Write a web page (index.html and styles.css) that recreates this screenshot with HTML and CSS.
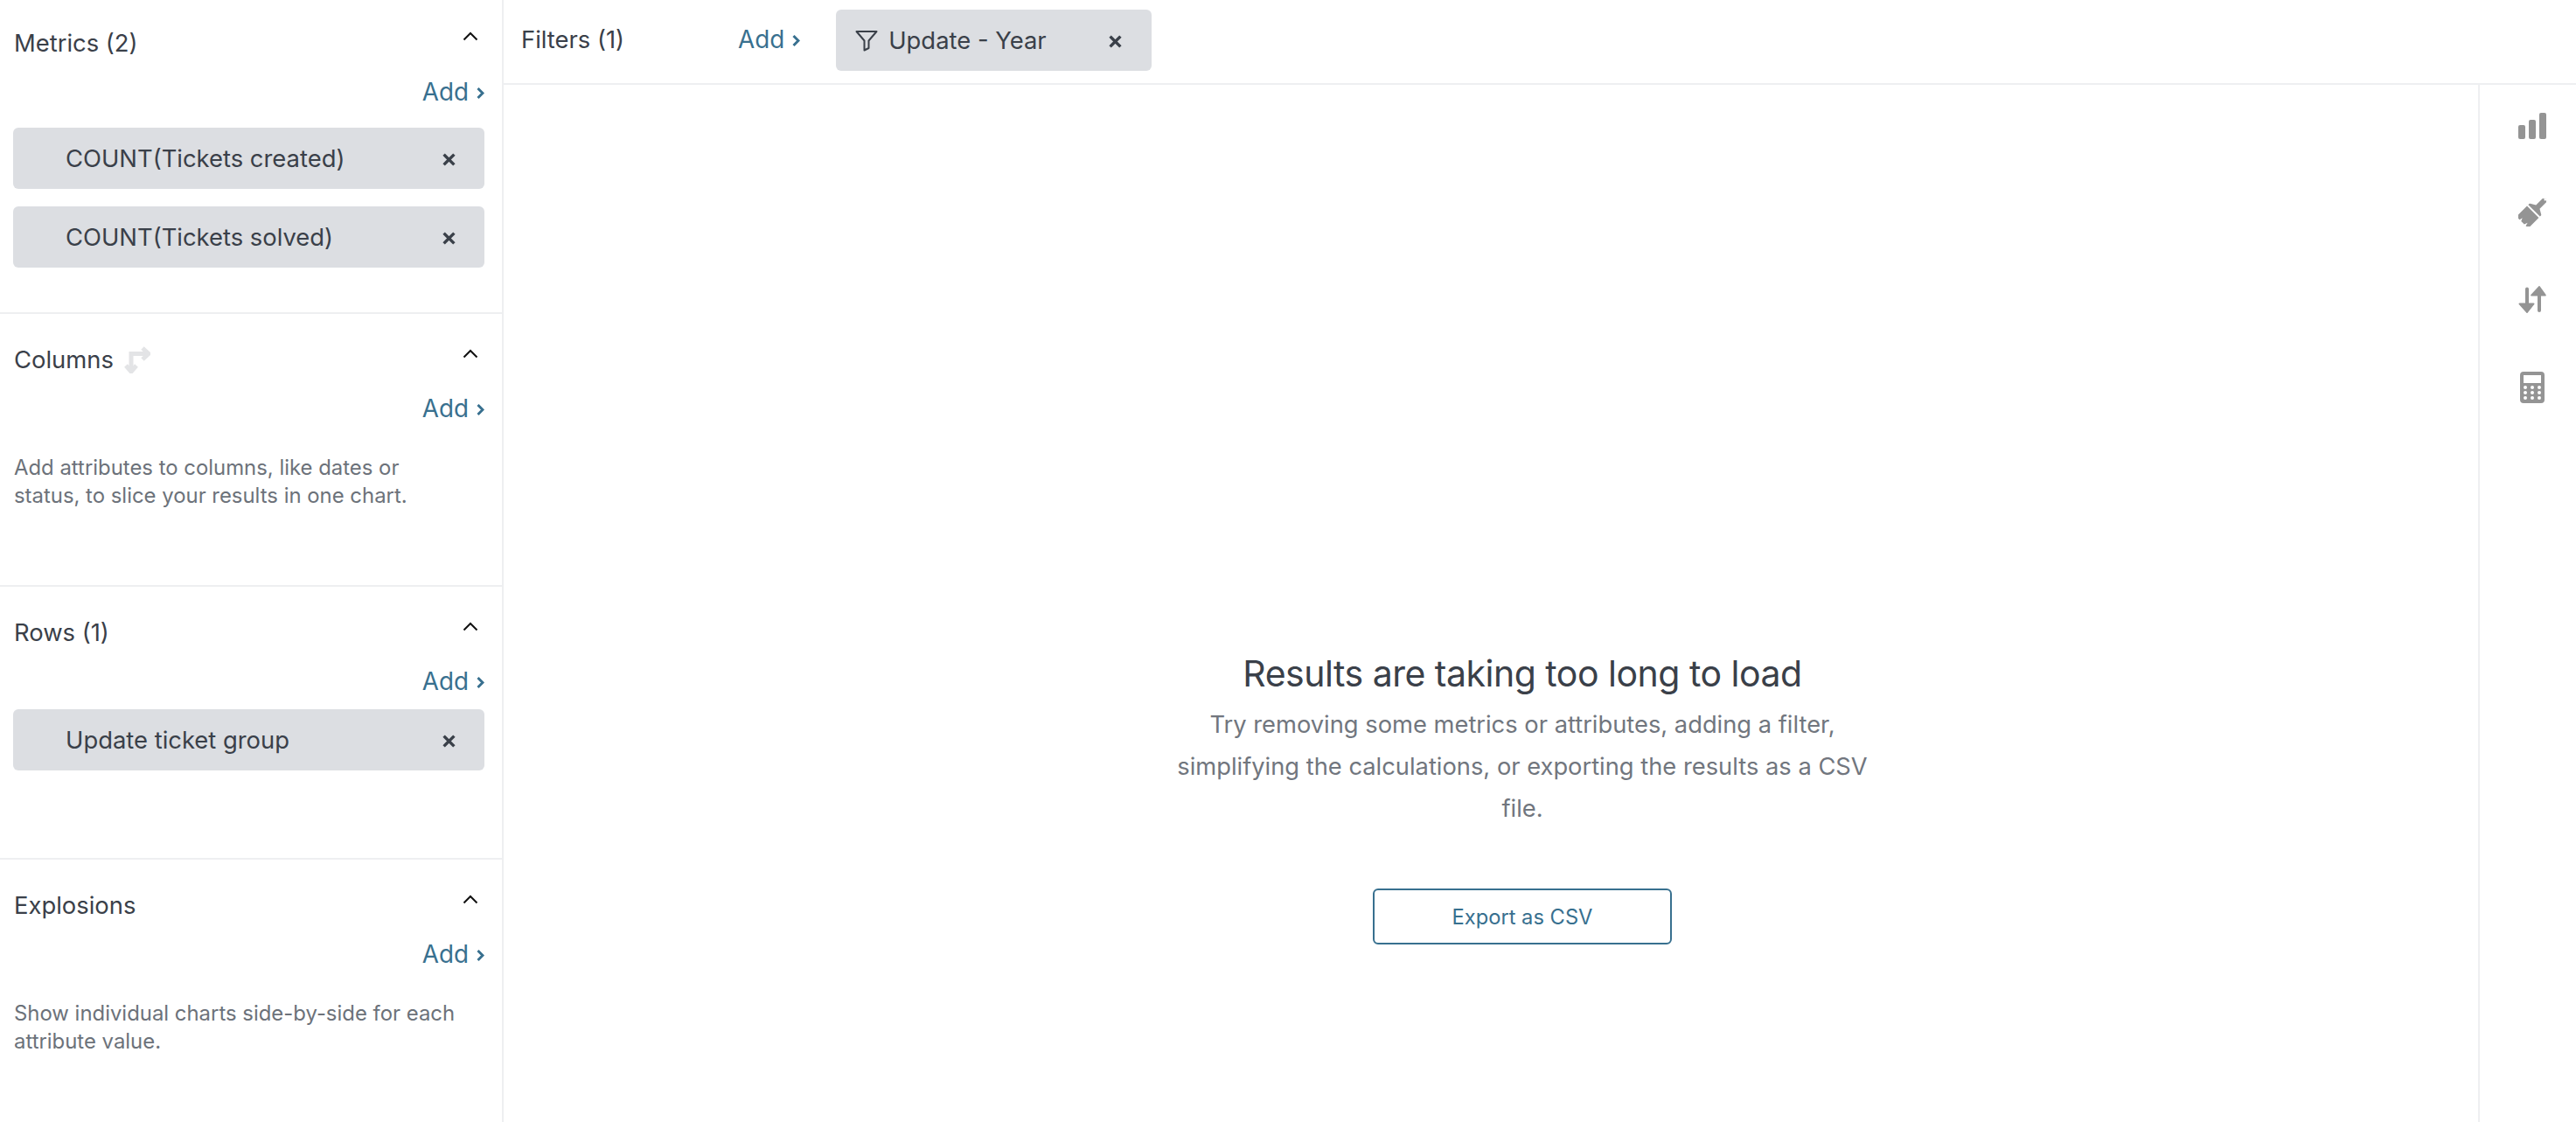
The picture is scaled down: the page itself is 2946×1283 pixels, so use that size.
FILE: index.html
```html
<!DOCTYPE html>
<html lang="en">
<head>
<meta charset="utf-8">
<title>Results</title>
<link rel="stylesheet" href="styles.css">
</head>
<body>
<div class="app">
  <aside class="sidebar">
    <section class="panel panel-first">
      <header class="panel-head">
        <span class="panel-title">Metrics (2)</span>
        <svg class="chev" viewBox="0 0 18 11"><path d="M1.500 9.500 9 2l7.500 7.500"/></svg>
      </header>
      <a class="add add-side">Add <svg class="gt" viewBox="0 0 9 15"><path d="M1.500 2l5.500 5.500-5.500 5.500"/></svg></a>
      <div class="pills">
        <div class="pill"><span>COUNT(Tickets created)</span><svg class="x" viewBox="0 0 14 14"><path d="M1.500 1.500l11 11M12.500 1.500l-11 11"/></svg></div>
        <div class="pill"><span>COUNT(Tickets solved)</span><svg class="x" viewBox="0 0 14 14"><path d="M1.500 1.500l11 11M12.500 1.500l-11 11"/></svg></div>
      </div>
    </section>
    <section class="panel">
      <header class="panel-head">
        <span class="panel-title">Columns<svg class="swap" viewBox="0 0 30 31"><path d="M8 29V8.500h20"/><path d="M21 2l7 6.500-7 6.500"/><path d="M2 22l6 7 6-7"/></svg></span>
        <svg class="chev" viewBox="0 0 18 11"><path d="M1.500 9.500 9 2l7.500 7.500"/></svg>
      </header>
      <a class="add add-side">Add <svg class="gt" viewBox="0 0 9 15"><path d="M1.500 2l5.500 5.500-5.500 5.500"/></svg></a>
      <p class="hint">Add attributes to columns, like dates or status, to slice your results in one chart.</p>
    </section>
    <section class="panel">
      <header class="panel-head">
        <span class="panel-title">Rows (1)</span>
        <svg class="chev" viewBox="0 0 18 11"><path d="M1.500 9.500 9 2l7.500 7.500"/></svg>
      </header>
      <a class="add add-side">Add <svg class="gt" viewBox="0 0 9 15"><path d="M1.500 2l5.500 5.500-5.500 5.500"/></svg></a>
      <div class="pills pills-tight">
        <div class="pill"><span>Update ticket group</span><svg class="x" viewBox="0 0 14 14"><path d="M1.500 1.500l11 11M12.500 1.500l-11 11"/></svg></div>
      </div>
    </section>
    <section class="panel panel-last">
      <header class="panel-head">
        <span class="panel-title">Explosions</span>
        <svg class="chev" viewBox="0 0 18 11"><path d="M1.500 9.500 9 2l7.500 7.500"/></svg>
      </header>
      <a class="add add-side">Add <svg class="gt" viewBox="0 0 9 15"><path d="M1.500 2l5.500 5.500-5.500 5.500"/></svg></a>
      <p class="hint">Show individual charts side-by-side for each attribute value.</p>
    </section>
  </aside>
  <div class="main">
    <div class="filterbar">
      <span class="filter-title">Filters (1)</span>
      <a class="add add-filter">Add <svg class="gt" viewBox="0 0 9 15"><path d="M1.500 2l5.500 5.500-5.500 5.500"/></svg></a>
      <div class="filter-pill">
        <svg class="funnel" viewBox="0 0 26 26"><path d="M1.500 3h23L15.500 13.500V22l-5 2.500V13.500z"/></svg>
        <span class="filter-label">Update - Year</span>
        <svg class="x" viewBox="0 0 14 14"><path d="M1.500 1.500l11 11M12.500 1.500l-11 11"/></svg>
      </div>
    </div>
    <div class="body">
      <div class="canvas">
        <div class="message">
          <h1 class="msg-title">Results are taking too long to load</h1>
          <p class="msg-text">Try removing some metrics or attributes, adding a filter, simplifying the calculations, or exporting the results as a CSV file.</p>
          <button class="export">Export as CSV</button>
        </div>
      </div>
      <nav class="rail">
        <svg class="rail-icon" viewBox="0 0 32 32"><rect x="0" y="14" width="8" height="16" rx="2"/><rect x="12" y="8" width="8" height="22" rx="2"/><rect x="24" y="0" width="8" height="30" rx="2"/></svg>
        <svg class="rail-icon" viewBox="0 0 32 32"><g transform="rotate(45 16 16)"><path fill-rule="evenodd" d="M13 7V-5a3 3 0 0 1 6 0V7l6 3.500a1.500 1.500 0 0 1 .5 1V13H6.500v-1.500a1.500 1.500 0 0 1 .5-1zM16-6.200a1.300 1.300 0 1 0 0 2.600 1.300 1.300 0 0 0 0-2.600z"/><path d="M6.500 15h19v17h-4l-1-4-1.500 4h-5l-1.500-3.500L11.500 32h-5z"/></g></svg>
        <svg class="rail-icon rail-sort" viewBox="0 0 32 32"><path d="M8 3.500a2 2 0 0 1 4 0v16h5.500a1 1 0 0 1 .8 1.600L10.800 30.500a1 1 0 0 1-1.600 0L.7 21.100a1 1 0 0 1 .8-1.600H8z"/><path d="M22 28a2 2 0 0 0 4 0V11.500h4.800a1 1 0 0 0 .8-1.600L24.800 .5a1 1 0 0 0-1.600 0L14.400 9.900a1 1 0 0 0 .8 1.600H22z"/></svg>
        <svg class="rail-icon rail-calc" viewBox="0 0 32 36"><path fill-rule="evenodd" d="M6 0h20a4 4 0 0 1 4 4v28a4 4 0 0 1-4 4H6a4 4 0 0 1-4-4V4a4 4 0 0 1 4-4zm0 4v9h20V4zM8 16a2 2 0 1 0 0 4 2 2 0 0 0 0-4zm8 0a2 2 0 1 0 0 4 2 2 0 0 0 0-4zm8 0a2 2 0 1 0 0 4 2 2 0 0 0 0-4zM8 22a2 2 0 1 0 0 4 2 2 0 0 0 0-4zm8 0a2 2 0 1 0 0 4 2 2 0 0 0 0-4zm8 0a2 2 0 1 0 0 4 2 2 0 0 0 0-4zM8 28a2 2 0 1 0 0 4 2 2 0 0 0 0-4zm8 0a2 2 0 1 0 0 4 2 2 0 0 0 0-4zm8 0a2 2 0 1 0 0 4 2 2 0 0 0 0-4z"/></svg>
      </nav>
    </div>
  </div>
</div>
</body>
</html>
```
FILE: styles.css
```css
* { box-sizing: border-box; }
html, body { margin: 0; height: 100%; }
body { background: #fff; color: #3a4049; font-family: Inter, "Noto Sans", sans-serif; font-size: 27.4px; overflow: hidden; }
.app { display: flex; height: 1283px; }
.sidebar { width: 576px; flex: none; border-right: 2px solid #eeeff1; display: flex; flex-direction: column; }
.panel { height: 312px; padding: 0 20px 0 16px; border-bottom: 2px solid #eeeff1; }
.panel-first { height: 359px; }
.panel-last { border-bottom: 0; flex: 1; }
.panel-head { display: flex; justify-content: space-between; align-items: flex-start; height: 62px; padding-top: 35px; }
.panel-first .panel-head { padding-top: 32px; }
.panel-title { display: flex; align-items: center; line-height: 34px; }
.chev { width: 18px; height: 11px; margin: 5px 7px 0 0; fill: none; stroke: #111; stroke-width: 2; }
.panel-first .chev { margin-top: 4px; }
.swap { width: 30px; height: 31px; margin-left: 12px; fill: none; stroke: #e3e4e6; stroke-width: 5; }
.add { color: #38708f; display: inline-flex; align-items: center; gap: 9px; line-height: 34px; font-size: 27.8px; }
.add-side { display: flex; justify-content: flex-end; margin-top: 29px; }
.panel-first .add-side { margin-top: 26px; }
.gt { width: 9px; height: 15px; fill: none; stroke: #38708f; stroke-width: 3; margin-top: 2px; }
.pills { display: flex; flex-direction: column; gap: 20px; margin-top: 24px; margin-left: -1px; }
.pills-tight { margin-top: 15px; }
.pill { height: 70px; background: #dcdee2; border-radius: 6px; display: flex; align-items: center; justify-content: space-between; padding: 0 33px 0 60px; }
.x { width: 15px; height: 15px; margin-top: 2px; fill: none; stroke: #3a4049; stroke-width: 3.200; flex: none; }
.hint { margin: 35px 0 0 0; color: #6c727a; font-size: 23.900px; line-height: 32px; max-width: 512px; }
.main { flex: 1; display: flex; flex-direction: column; min-width: 0; }
.filterbar { height: 97px; flex: none; border-bottom: 2px solid #eeeff1; display: flex; align-items: flex-start; padding: 11px 0 0 20px; }
.filter-title { width: 248px; line-height: 70px; margin-top: -1px; }
.add-filter { line-height: 70px; margin-top: -1px; }
.filter-pill { margin-left: 41px; width: 361px; height: 70px; background: #dcdee2; border-radius: 6px; display: flex; align-items: center; padding: 0 34px 0 22px; }
.funnel { width: 26px; height: 26px; fill: none; stroke: #3a4049; stroke-width: 2; stroke-linejoin: round; flex: none; }
.filter-label { margin-left: 12px; flex: 1; }
.body { flex: 1; display: flex; min-height: 0; }
.canvas { flex: 1; min-width: 0; display: flex; justify-content: center; padding: 648px 0 0 72px; }
.message { width: 800px; text-align: center; display: flex; flex-direction: column; align-items: center; }
.msg-title { margin: 0; font-size: 41px; font-weight: 400; line-height: 50px; letter-spacing: -0.5px; }
.msg-text { margin: 10px 0 0; color: #71767e; font-size: 27.300px; line-height: 48px; width: 800px; }
.export { margin-top: 67px; width: 342px; height: 64px; background: #fff; border: 2px solid #38708f; border-radius: 6px; color: #38708f; font: 23.700px Inter, "Noto Sans", sans-serif; }
.rail { width: 112px; flex: none; border-left: 2px solid #eeeff1; display: flex; flex-direction: column; align-items: center; gap: 66px; padding: 32px 0 0 10px; }
.rail-icon { width: 32px; height: 32px; fill: #949494; flex: none; }
.rail-sort { margin-top: 2px; }
.rail-calc { height: 36px; }
```
